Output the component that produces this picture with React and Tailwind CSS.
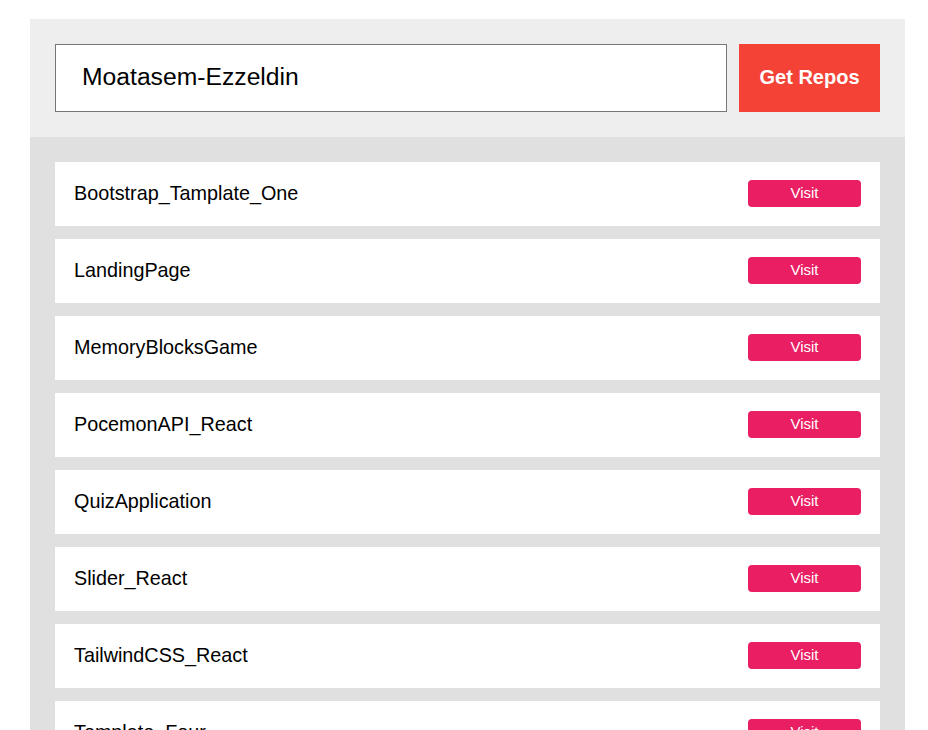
import React from "react";

const repos = [
  "Bootstrap_Tamplate_One",
  "LandingPage",
  "MemoryBlocksGame",
  "PocemonAPI_React",
  "QuizApplication",
  "Slider_React",
  "TailwindCSS_React",
  "Template_Four",
  "Template_Three",
];

export default function App() {
  return (
    <div className="min-h-screen bg-white pt-[19px] pl-[30px]" style={{ fontFamily: '"Liberation Sans", Arial, sans-serif' }}>
      <div className="w-[875px]">
        <div className="flex gap-[12px] bg-[#eeeeee] p-[25px]">
          <input
            className="h-[68px] w-[672px] border border-[#767676] bg-white pb-[2px] pl-[26px] text-[24.7px] text-black outline-none"
            defaultValue="Moatasem-Ezzeldin"
          />
          <button className="h-[68px] w-[141px] bg-[#f44336] pb-[2px] text-[20px] font-bold text-white">
            Get Repos
          </button>
        </div>
        <div className="flex flex-col gap-[13px] bg-[#e0e0e0] p-[25px]">
          {repos.map((r) => (
            <div key={r} className="flex h-[64px] items-center justify-between bg-white pb-[1px] pl-[19px] pr-[19px]">
              <span className="text-[19.8px] text-black">{r}</span>
              <a className="flex h-[27px] w-[113px] items-center justify-center rounded-[4px] bg-[#e91e63] text-[15px] text-white">
                Visit
              </a>
            </div>
          ))}
        </div>
      </div>
    </div>
  );
}
